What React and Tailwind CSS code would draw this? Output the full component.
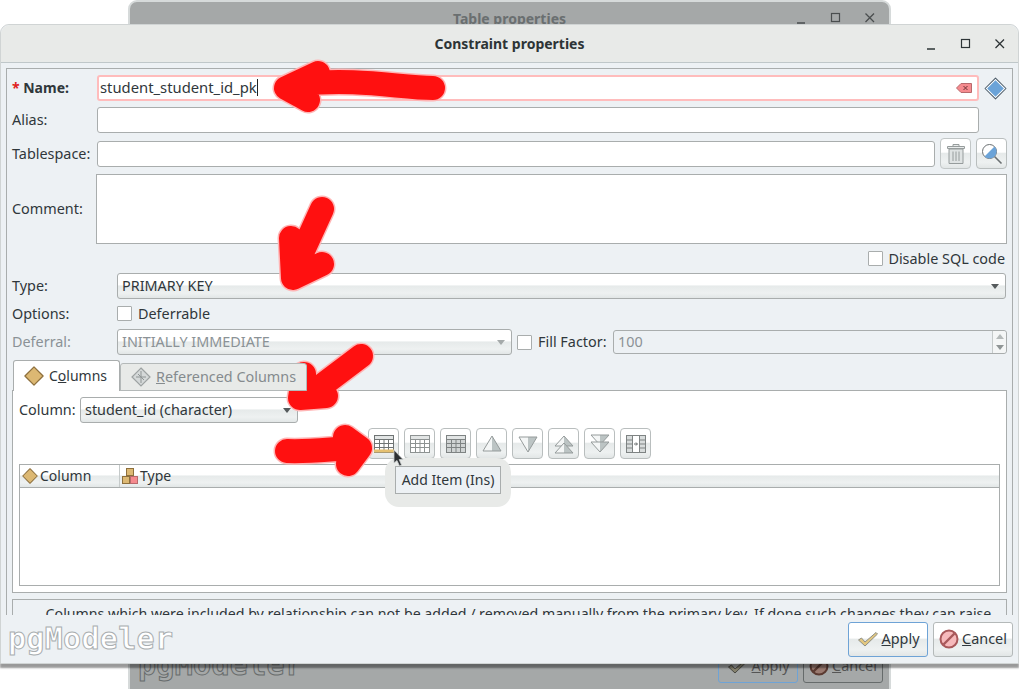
import React from "react";

const ctl = "bg-[linear-gradient(#ffffff_0%,#ffffff_45%,#e6eaea_50%,#eef1f1_80%,#e2e6e6_100%)]";

function Diamond({ size = 22, fill = "#dcb873", stroke = "#8d6f3c", halo }) {
    return (
        <svg width={size} height={size} viewBox="0 0 22 22" className="shrink-0">
            <path d="M11 1 L21 11 L11 21 L1 11 Z" fill={halo ? "#fff" : fill} stroke={stroke} strokeWidth={halo ? "1" : "1.4"} strokeLinejoin="round" />
            {halo && <path d="M11 3 L19 11 L11 19 L3 11 Z" fill={fill} />}
        </svg>
    );
}

function RefDiamond() {
    return (
        <svg width="20" height="20" viewBox="0 0 20 20" className="shrink-0">
            <path d="M10 1 L19 10 L10 19 L1 10 Z" fill="#d5d9d9" stroke="#9da2a2" strokeWidth="1.2" />
            <path d="M10 4 V16 M5 10 H15 M7 7 L13 13" stroke="#8f9595" strokeWidth="1" fill="none" />
        </svg>
    );
}

function GridIcon({ tone = "#6f7474", bottom, dark }) {
    return (
        <svg width="20" height="20" viewBox="0 0 20 20">
            <rect x="0.5" y="1.5" width="19" height="17" fill={dark ? "#d0d4d4" : "#fff"} stroke={tone} />
            <path d="M0.5 5.5 H19.5 M0.5 9.5 H19.5 M0.5 13.5 H19.5 M5.5 5.5 V18 M10 5.5 V18 M14.5 5.5 V18" stroke={tone} fill="none" />
            <rect x="0.5" y="1.5" width="19" height="4" fill="#e2e5e5" stroke={tone} />
            {bottom && <rect x="0" y="15.5" width="20" height="3" fill={bottom} />}
        </svg>
    );
}

function ToolBtn({ children }) {
    return (
        <div className={`w-[31px] h-[31px] flex items-center justify-center rounded border border-[#b9bebe] ${ctl}`}>
            {children}
        </div>
    );
}

function Tri({ down, double }) {
    const shapes = double
        ? (down
            ? ["M1 1 H19 L10 11 Z", "M1 8 H19 L10 18 Z"]
            : ["M1 12 L10 2 L19 12 Z", "M1 19 L10 9 L19 19 Z"])
        : (down ? ["M1 3 H19 L10 18 Z"] : ["M1 17 H19 L10 2 Z"]);
    return (
        <svg width="20" height="20" viewBox="0 0 20 20">
            <defs>
                <linearGradient id="triSplit">
                    <stop offset="50%" stopColor="#f4f6f6" />
                    <stop offset="50%" stopColor="#bcc4c4" />
                </linearGradient>
            </defs>
            {shapes.map((d, i) => (
                <path key={i} d={d} fill="url(#triSplit)" stroke="#959b9b" strokeLinejoin="round" />
            ))}
        </svg>
    );
}

function Check({ className = "" }) {
    return <div className={`w-[15px] h-[15px] bg-white border border-[#a9adad] rounded-[1px] shrink-0 ${className}`} />;
}

function Caret({ color = "#555a5c" }) {
    return (
        <svg width="8" height="5" viewBox="0 0 8 5" className="shrink-0">
            <path d="M0 0 H8 L4 5 Z" fill={color} />
        </svg>
    );
}

function Combo({ text, disabled, className = "" }) {
    return (
        <div className={`h-[26px] flex items-center justify-between pl-[4px] pr-[6px] border border-[#a9adad] rounded-[3px] ${ctl} ${className}`}>
            <span className={disabled ? "text-[#8b9296]" : "text-[#30373b]"}>{text}</span>
            <Caret color={disabled ? "#a5aaaa" : "#555a5c"} />
        </div>
    );
}

function Input({ className = "" }) {
    return <div className={`h-[26px] bg-white border border-[#a9adad] rounded-[3px] ${className}`} />;
}

function WinControls({ color = "#2d3436", gap = "gap-[20px]" }) {
    return (
        <div className={`flex items-center ${gap}`}>
            <svg width="14" height="14" viewBox="0 0 14 14"><path d="M2 12 H10" stroke={color} strokeWidth="1.5" /></svg>
            <svg width="14" height="14" viewBox="0 0 14 14"><rect x="2.5" y="2.5" width="8" height="8" fill="none" stroke={color} strokeWidth="1.2" /></svg>
            <svg width="14" height="14" viewBox="0 0 14 14"><path d="M2.5 2.5 L11 11 M11 2.5 L2.5 11" stroke={color} strokeWidth="1.3" /></svg>
        </div>
    );
}

function Logo({ ghost }) {
    return (
        <span
            className={`font-['DejaVu_Sans_Mono',monospace] text-[30px] leading-[34px] tracking-[0.3px] font-bold ${
                ghost
                    ? "text-transparent [-webkit-text-stroke:1px_#686c6c]"
                    : "text-white [-webkit-text-stroke:1px_#a9aeb0]"
            }`}
        >
            pgModeler
        </span>
    );
}

function ApplyIcon({ dark }) {
    return (
        <svg width="22" height="16" viewBox="0 0 22 16" className="shrink-0">
            <path d="M1.5 9 L4.5 7 L8 11 L19 1.5 L20.5 3 L8 15 Z" fill={dark ? "#86826e" : "#e3c77f"} stroke={dark ? "#4a4a44" : "#8e8f86"} strokeLinejoin="round" />
        </svg>
    );
}

function CancelIcon({ dark }) {
    return (
        <svg width="20" height="20" viewBox="0 0 20 20" className="shrink-0">
            <circle cx="10" cy="10" r="8.5" fill={dark ? "#9a7a70" : "#f6b9bb"} stroke={dark ? "#5b3b32" : "#a8585a"} strokeWidth="2" />
            <path d="M4.5 15.5 L15.5 4.5" stroke={dark ? "#5b3b32" : "#a8585a"} strokeWidth="2.4" />
        </svg>
    );
}

function DialogButton({ icon, label, rest, active, ghost }) {
    return (
        <div
            className={`w-[80px] h-[35px] flex items-center justify-center gap-[3px] rounded-[3px] border ${
                active ? "border-[#6ea3d6]" : ghost ? "border-[#666b6b]" : "border-[#b4b9b9]"
            } ${ghost ? "" : ctl}`}
        >
            {icon}
            <span className={`pb-0! ${ghost ? "text-[#555]" : "text-[#30373b]"}`}>
                <span className="underline">{label}</span>{rest}
            </span>
        </div>
    );
}

function Arrow({ d }) {
    return (
        <>
            <path d={d} fill="none" stroke="#ffb4b4" strokeWidth="27" strokeLinecap="round" strokeLinejoin="round" />
            <path d={d} fill="none" stroke="#ff1010" strokeWidth="24" strokeLinecap="round" strokeLinejoin="round" />
        </>
    );
}

export default function App() {
    return (
        <div className="relative w-[1019px] h-[689px] bg-white overflow-hidden font-['Noto_Sans',sans-serif] text-[14.4px] text-[#30373b] [&_span]:pb-[1px]">
            {/* Table properties window behind the dialog */}
            <div className="absolute left-[128px] top-0 w-[763px] h-[700px] bg-[#a5a8a8] rounded-t-[9px] border-2 border-[#d6dada] flex flex-col justify-between">
                <div className="relative h-[24px] pt-[9px] flex items-center justify-center">
                    <span className="font-bold text-[14px] text-[#6a6f70]">Table properties</span>
                    <div className="absolute right-[12px] top-[9px]">
                        <WinControls color="#4a4e4f" />
                    </div>
                </div>
                <div className="flex items-start justify-between pl-[8px] pr-[6px] pt-[4px] h-[54px]">
                    <Logo ghost />
                    <div className="flex gap-[5px]">
                        <DialogButton ghost active icon={<ApplyIcon dark />} label="A" rest="pply" />
                        <DialogButton ghost icon={<CancelIcon dark />} label="C" rest="ancel" />
                    </div>
                </div>
            </div>

            {/* Constraint properties dialog */}
            <div className="absolute left-0 top-[24px] w-[1019px] h-[640px] bg-[#edf1f4] rounded-t-[9px] border border-[#d0d4d4] shadow-[0_4px_2px_rgba(0,0,0,0.4)] flex flex-col">
                <div className="relative h-[38px] bg-[#e8eae8] rounded-t-[9px] border-b border-[#bfc7c9] flex items-center justify-center shrink-0">
                    <span className="font-bold text-[14px] text-[#2d3436]">Constraint properties</span>
                    <div className="absolute right-[11px] top-[12px]">
                        <WinControls />
                    </div>
                </div>

                <div className="h-[547px] mt-[5px] mx-[5px] overflow-hidden border-x border-t border-[#a9adad] px-[5px] pt-[6px] flex flex-col shrink-0">
                    <div className="flex items-center h-[26px] shrink-0">
                        <span className="w-[85px] font-bold text-[14px] whitespace-nowrap"><span className="text-[#e02020]">*</span> Name:</span>
                        <div className="w-[882px] h-[26px] bg-white border-2 border-[#ffbcbc] rounded-[3px] flex items-center justify-between pl-[1px] pr-[5px]">
                            <span className="flex items-center text-[14.8px] text-[#30373b]">student_student_id_pk<span className="w-px h-[17px] bg-[#222]" /></span>
                            <svg width="16" height="10" viewBox="0 0 16 10">
                                <path d="M0.5 5 L5 0.5 H15.5 V9.5 H5 Z" fill="#f58a8e" stroke="#b8696c" />
                                <path d="M7.5 3 L11.5 7 M11.5 3 L7.5 7" stroke="#6d3336" />
                            </svg>
                        </div>
                        <div className="ml-[5px]">
                            <Diamond size={23} fill="#6ba3d8" stroke="#4a5a68" halo />
                        </div>
                    </div>

                    <div className="flex items-center mt-[6px] shrink-0">
                        <span className="w-[85px]">Alias:</span>
                        <Input className="w-[882px]" />
                    </div>

                    <div className="flex items-center mt-[5px] h-[31px] shrink-0">
                        <span className="w-[85px] pb-0!">Tablespace:</span>
                        <Input className="w-[838px]" />
                        <div className={`ml-[5px] w-[31px] h-[31px] flex items-center justify-center rounded border border-[#c2c7c7] ${ctl}`}>
                            <svg width="20" height="22" viewBox="0 0 20 22">
                                <path d="M7 3 V1.5 H13 V3 M1.5 3.5 H18.5 V5.5 H1.5 Z" fill="#e8ebeb" stroke="#969c9c" />
                                <path d="M3 6 H17 V20.5 H3 Z" fill="#dfe3e3" stroke="#969c9c" />
                                <path d="M7 8.5 V18 M10 8.5 V18 M13 8.5 V18" stroke="#969c9c" />
                            </svg>
                        </div>
                        <div className={`ml-[5px] w-[31px] h-[31px] flex items-center justify-center rounded border border-[#b9bebe] ${ctl}`}>
                            <svg width="22" height="22" viewBox="0 0 22 22">
                                <path d="M13 13 L20.5 20.5" stroke="#6b7072" strokeWidth="1.6" />
                                <circle cx="8.5" cy="8.5" r="7" fill="#fff" stroke="#6b7072" />
                                <path d="M13.5 3.5 A7 7 0 0 1 3.5 13.5 Z" fill="#6ba3d8" />
                            </svg>
                        </div>
                    </div>

                    <div className="flex items-center mt-[5px] shrink-0">
                        <span className="w-[84px]">Comment:</span>
                        <div className="w-[911px] h-[70px] bg-white border border-[#a9adad]" />
                    </div>

                    <div className="flex items-center justify-end gap-[5px] h-[21px] mt-[4px] pr-[2px] shrink-0">
                        <Check />
                        <span className="pb-0!">Disable SQL code</span>
                    </div>

                    <div className="flex items-center mt-[4px] shrink-0">
                        <span className="w-[105px]">Type:</span>
                        <Combo text="PRIMARY KEY" className="w-[889px]" />
                    </div>

                    <div className="flex items-center h-[21px] mt-[4px] shrink-0">
                        <span className="w-[105px] pb-0!">Options:</span>
                        <Check />
                        <span className="ml-[6px] pb-0!">Deferrable</span>
                    </div>

                    <div className="flex items-center mt-[5px] shrink-0">
                        <span className="w-[105px] text-[#8b9296]">Deferral:</span>
                        <Combo text="INITIALLY IMMEDIATE" disabled className="w-[395px]" />
                        <Check className="ml-[5px]" />
                        <span className="ml-[6px] w-[75px] whitespace-nowrap">Fill Factor:</span>
                        <div className="w-[394px] h-[24px] bg-[#edf1f4] border border-[#a9adad] rounded-[3px] flex items-center justify-between pl-[4px]">
                            <span className="text-[#8b9296]">100</span>
                            <div className="w-[14px] h-full border-l border-[#c5caca] flex flex-col items-center justify-around bg-[#f4f6f6] rounded-r-[3px]">
                                <svg width="8" height="5" viewBox="0 0 8 5"><path d="M0 5 H8 L4 0 Z" fill="#b5baba" /></svg>
                                <svg width="8" height="5" viewBox="0 0 8 5"><path d="M0 0 H8 L4 5 Z" fill="#8f9595" /></svg>
                            </div>
                        </div>
                    </div>

                    {/* Tabs */}
                    <div className="flex items-end h-[31px] mt-[5px] shrink-0 relative z-10 -mb-px">
                        <div className="w-[107px] h-[31px] ml-px bg-white border border-b-0 border-[#a9adad] rounded-t-[3px] flex items-center gap-[5px] pl-[10px]">
                            <Diamond size={20} />
                            <span className="text-[14px]">C<span className="underline">o</span>lumns</span>
                        </div>
                        <div className="w-[187px] h-[28px] bg-[#e8eae8] border border-[#b4b9b9] rounded-t-[3px] flex items-center gap-[5px] pl-[10px]">
                            <RefDiamond />
                            <span className="text-[#858b8e] whitespace-nowrap"><span className="underline">R</span>eferenced Columns</span>
                        </div>
                    </div>
                    <div className="h-[203px] bg-white border border-[#a9adad] px-[6px] pt-[6px] flex flex-col shrink-0">
                        <div className="flex items-center">
                            <span className="w-[61px]">Column:</span>
                            <Combo text="student_id (character)" className="w-[218px]" />
                        </div>
                        <div className="flex gap-[5px] mt-[5px] ml-[349px]">
                            <ToolBtn><GridIcon bottom="#e5c070" /></ToolBtn>
                            <ToolBtn><GridIcon tone="#8d9292" /></ToolBtn>
                            <ToolBtn><GridIcon tone="#7e8383" dark /></ToolBtn>
                            <ToolBtn><Tri /></ToolBtn>
                            <ToolBtn><Tri down /></ToolBtn>
                            <ToolBtn><Tri double /></ToolBtn>
                            <ToolBtn><Tri double down /></ToolBtn>
                            <ToolBtn>
                                <svg width="20" height="20" viewBox="0 0 20 20">
                                    <rect x="0.5" y="1.5" width="19" height="17" fill="#d8dcdc" stroke="#7e8383" />
                                    <path d="M0.5 6 H19.5 M0.5 10 H19.5 M0.5 14 H19.5" stroke="#7e8383" />
                                    <rect x="6.5" y="1.5" width="7" height="17" fill="#fff" stroke="#7e8383" />
                                    <path d="M8 10 H11 M10 8.5 L11.5 10 L10 11.5" stroke="#5f6464" fill="none" />
                                </svg>
                            </ToolBtn>
                        </div>
                        <div className="mt-[5px] h-[122px] border border-[#a9adad] flex flex-col">
                            <div className={`h-[23px] flex items-center border-b border-[#a9adad] ${ctl}`}>
                                <div className="w-[100px] h-full flex items-center gap-[2px] pl-[2px] border-r border-[#c5caca]">
                                    <Diamond size={16} />
                                    <span className="text-[14px]">Column</span>
                                </div>
                                <div className="flex items-center gap-[2px] pl-[2px]">
                                    <svg width="16" height="16" viewBox="0 0 16 16">
                                        <rect x="4.5" y="0.5" width="7" height="7" fill="#dcb873" stroke="#8d6f3c" />
                                        <rect x="0.5" y="8.5" width="7" height="7" fill="#dcb873" stroke="#8d6f3c" />
                                        <rect x="8.5" y="8.5" width="7" height="7" fill="#f58a8e" stroke="#b8696c" />
                                    </svg>
                                    <span className="text-[14px]">Type</span>
                                </div>
                            </div>
                        </div>
                    </div>

                    <div className="mt-[6px] h-[60px] border border-[#a9adad] text-center text-[14.2px] pl-[18px] pt-[3px] shrink-0">
                        <span className="whitespace-nowrap">Columns which were included by relationship can not be added / removed manually from the primary key. If done such changes they can raise</span>
                    </div>
                </div>

                <div className="flex items-center justify-between flex-1 pl-[7px] pr-[5px]">
                    <Logo />
                    <div className="flex gap-[5px]">
                        <DialogButton active icon={<ApplyIcon />} label="A" rest="pply" />
                        <DialogButton icon={<CancelIcon />} label="C" rest="ancel" />
                    </div>
                </div>
            </div>

            {/* Tooltip halo and box */}
            <div className="absolute left-[385px] top-[458px] w-[126px] h-[49px] rounded-[14px] bg-[#e8eae8] flex items-start justify-center pt-[8px]">
                <div className="w-[106px] h-[28px] bg-[#edf1f4] border border-[#a9adad] flex items-center justify-center text-[14px] text-[#30373b]">
                    <span className="whitespace-nowrap">Add Item (Ins)</span>
                </div>
            </div>

            {/* Mouse cursor */}
            <svg className="absolute left-[393px] top-[449px]" width="12" height="19" viewBox="0 0 12 19">
                <path d="M1 1 L1 14 L4 11.5 L6.5 17 L8.5 16 L6.2 10.5 L10 10.5 Z" fill="#2d3033" stroke="#c8cccc" strokeWidth="0.8" />
            </svg>

            {/* Hand drawn red arrows */}
            <svg className="absolute left-0 top-0 pointer-events-none" width="1019" height="689" viewBox="0 0 1019 689">
                <Arrow d="M433 88 C 400 88, 360 78, 300 84 M318 73 L286 88 L308 100" />
                <Arrow d="M322 209 L296 266 M291 238 L293 278 L322 264" />
                <Arrow d="M361 356 L308 396 M304 374 L300 398 L326 396" />
                <Arrow d="M287 451 C 310 452, 330 449, 352 448 M345 437 L360 448 L348 464" />
            </svg>
        </div>
    );
}
